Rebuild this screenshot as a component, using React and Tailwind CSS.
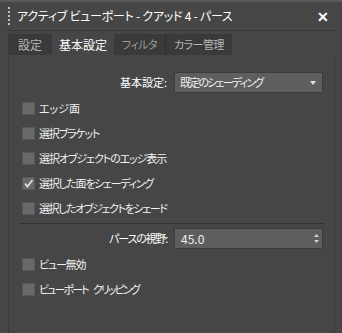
import React from "react";

const font = { fontFamily: '"Noto Sans CJK JP", "Noto Sans", sans-serif' };

function Check({ checked, label, track }) {
  return (
    <div className="flex h-[25px] items-center pl-[13px]">
      <div className="relative h-[13px] w-[13px] border border-[#575757] bg-[#696969]">
        {checked && (
          <svg viewBox="0 0 13 13" className="absolute left-[-1px] top-[-1px] h-[13px] w-[13px]">
            <path d="M3 6.5 L5.5 9.5 L10.5 3" stroke="#dcdcdc" strokeWidth="1.8" fill="none" />
          </svg>
        )}
      </div>
      <span className={`ml-[4px] flex text-[11px] leading-none text-[#f2f2f2] [font-feature-settings:'palt'] ${track}`}>{label}</span>
    </div>
  );
}

export default function App() {
  return (
    <div className="h-[333px] w-[342px] overflow-hidden border-t-[2px] border-[#5a5a5a] bg-[#464646]" style={font}>
      {/* title bar */}
      <div className="mx-[6px] flex h-[29px] items-center border-b border-[#363636]">
        <div className="ml-[2px] h-[18px] w-[2px] border-l-2 border-dotted border-[#bdbdbd]" />
        <span className="ml-[7px] text-[12px] leading-none tracking-[-0.25px] text-white [font-feature-settings:'palt']">
          アクティブ ビューポート - クアッド 4 - パース
        </span>
        <span className="ml-auto mr-[7px] text-[14px] font-bold leading-none text-white">✕</span>
      </div>
      {/* tabs */}
      <div className="ml-[8px] mt-[3px] flex h-[21px] text-[12px] leading-none [font-feature-settings:'palt']">
        <div className="flex w-[44px] items-center justify-center bg-[#3a3a3a] text-[#b5b5b5]">設定</div>
        <div className="flex w-[62px] items-center justify-center bg-[#464646] text-white">基本設定</div>
        <div className="flex w-[51px] items-center justify-center bg-[#3a3a3a] text-[11px] tracking-[-0.5px] text-[#9a9a9a]">フィルタ</div>
        <div className="flex w-[67px] items-center justify-center border-l border-[#2f2f2f] bg-[#3a3a3a] text-[11px] tracking-[-0.5px] text-[#b5b5b5]">カラー管理</div>
      </div>
      {/* panel */}
      <div className="ml-[8px] mr-[7px] h-[300px] border-x border-[#3a3a3a]">
        <div className="flex items-center pt-[17px]">
          <div className="w-[158px] text-right text-[11px] leading-none text-white [font-feature-settings:'palt']">基本設定:</div>
          <div className="ml-[7px] flex h-[21px] w-[149px] items-center border border-[#3c3c3c] bg-[#5e5e5e] pl-[5px] pr-[6px]">
            <span className="text-[11px] leading-none tracking-[-1.8px] text-[#f0f0f0] [font-feature-settings:'palt']">既定のシェーディング</span>
            <svg viewBox="0 0 6 4" className="ml-auto h-[4px] w-[6px]">
              <path d="M0 0 H6 L3 4 Z" fill="#e0e0e0" />
            </svg>
          </div>
        </div>
        <div className="mt-[3px] flex flex-col">
          <Check label="エッジ面" track="tracking-[0px]" />
          <Check label="選択ブラケット" track="tracking-[-1.2px]" />
          <Check label="選択オブジェクトのエッジ表示" track="tracking-[-1.1px]" />
          <Check label="選択した面をシェーディング" track="tracking-[-1.3px]" checked />
          <Check label="選択したオブジェクトをシェード" track="tracking-[-1.4px]" />
        </div>
        <div className="ml-[11px] mr-[10px] mt-[2px] h-px bg-[#333333]" />
        <div className="mt-[4px] flex items-center">
          <div className="w-[158px] text-right text-[11px] leading-none tracking-[-1.2px] text-white [font-feature-settings:'palt']">パースの視野:</div>
          <div className="ml-[7px] flex h-[21px] w-[149px] items-center border border-[#3c3c3c] bg-[#5e5e5e] pl-[6px] pr-[3px]">
            <span className="text-[12px] leading-none text-[#f0f0f0]">45.0</span>
            <svg viewBox="0 0 5 9" className="ml-auto h-[9px] w-[5px]">
              <path d="M2.5 0 L5 3 H0 Z" fill="#d0d0d0" />
              <path d="M0 6 H5 L2.5 9 Z" fill="#d0d0d0" />
            </svg>
          </div>
        </div>
        <div className="mt-[3px] flex flex-col">
          <Check label="ビュー無効" track="tracking-[-1.2px]" />
          <Check
            label={
              <>
                <span>ビューポート</span>
                <span className="ml-[5px]">クリッピング</span>
              </>
            }
            track="tracking-[-1.9px]"
          />
        </div>
      </div>
    </div>
  );
}
